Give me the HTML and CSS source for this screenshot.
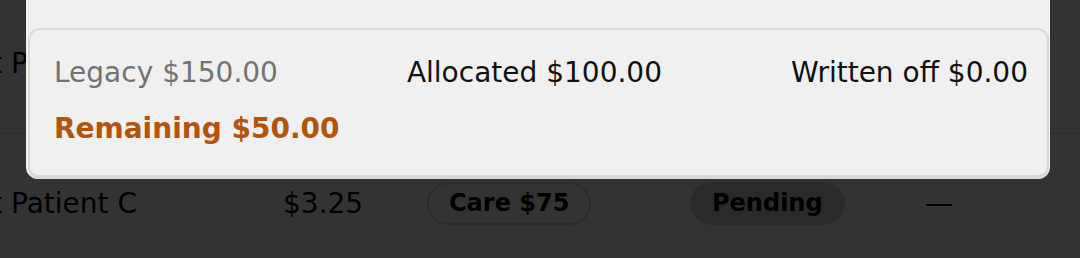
FILE: index.html
```html
<!DOCTYPE html>
<html lang="en">
<head>
  <meta charset="UTF-8">
  <meta name="viewport" content="width=device-width, initial-scale=1.0">
  <title>Allocation summary</title>
  <link rel="stylesheet" href="styles.css">
</head>
<body>
  <div class="table">
    <div class="row">
      <div class="cell name">Test Patient B</div>
    </div>
    <div class="row">
      <div class="cell name">Test Patient C</div>
      <div class="cell amount">$3.25</div>
      <div class="cell"><span class="pill outline">Care $75</span></div>
      <div class="cell"><span class="pill filled">Pending</span></div>
      <div class="cell dash">&mdash;</div>
    </div>
  </div>

  <div class="overlay"></div>

  <div class="modal">
    <div class="summary">
      <div class="summary-row">
        <span class="muted">Legacy $150.00</span>
        <span>Allocated $100.00</span>
        <span>Written off $0.00</span>
      </div>
      <div class="remaining">Remaining $50.00</div>
    </div>
  </div>
</body>
</html>
```

FILE: styles.css
```css
* {
  margin: 0;
  padding: 0;
  box-sizing: border-box;
  font-family: 'DejaVu Sans', 'Liberation Sans', sans-serif;
}

body {
  background-color: #fff;
  width: 1080px;
  height: 258px;
  overflow: hidden;
  position: relative;
  font-size: 28px;
  color: #000;
}

.table {
  margin-top: -6px;
}

.row {
  display: grid;
  grid-template-columns: 336px 144px 263px 235px 1fr;
  align-items: center;
  height: 140px;
  border-bottom: 1px solid #d4d4d4;
  margin-left: -53px;
}

.cell {
  white-space: nowrap;
  line-height: 33px;
}

.pill {
  display: inline-flex;
  align-items: center;
  height: 43px;
  border-radius: 22px;
  font-size: 24px;
  font-weight: bold;
}

.pill.outline {
  padding: 0 20px;
  border: 2px solid #d7d7d7;
}

.pill.filled {
  padding: 0 22px;
  background: #d2d2d2;
}

.overlay {
  position: absolute;
  inset: 0;
  background: rgba(0, 0, 0, 0.8);
}

.modal {
  position: absolute;
  top: 0;
  left: 26px;
  width: 1024px;
  padding-top: 28px;
  background: #f0f0f0;
  border-radius: 0 0 12px 12px;
}

.summary {
  margin: 0 1px 0 2px;
  padding: 26px 19px 30px 24px;
  border: 2px solid #d9d9d9;
  border-bottom-width: 4px;
  border-radius: 12px;
  line-height: 33px;
  color: #111;
}

.summary-row {
  display: flex;
  justify-content: space-between;
  margin-bottom: 23px;
}

.muted {
  color: #737373;
}

.remaining {
  font-weight: bold;
  color: #b5530d;
}
```
